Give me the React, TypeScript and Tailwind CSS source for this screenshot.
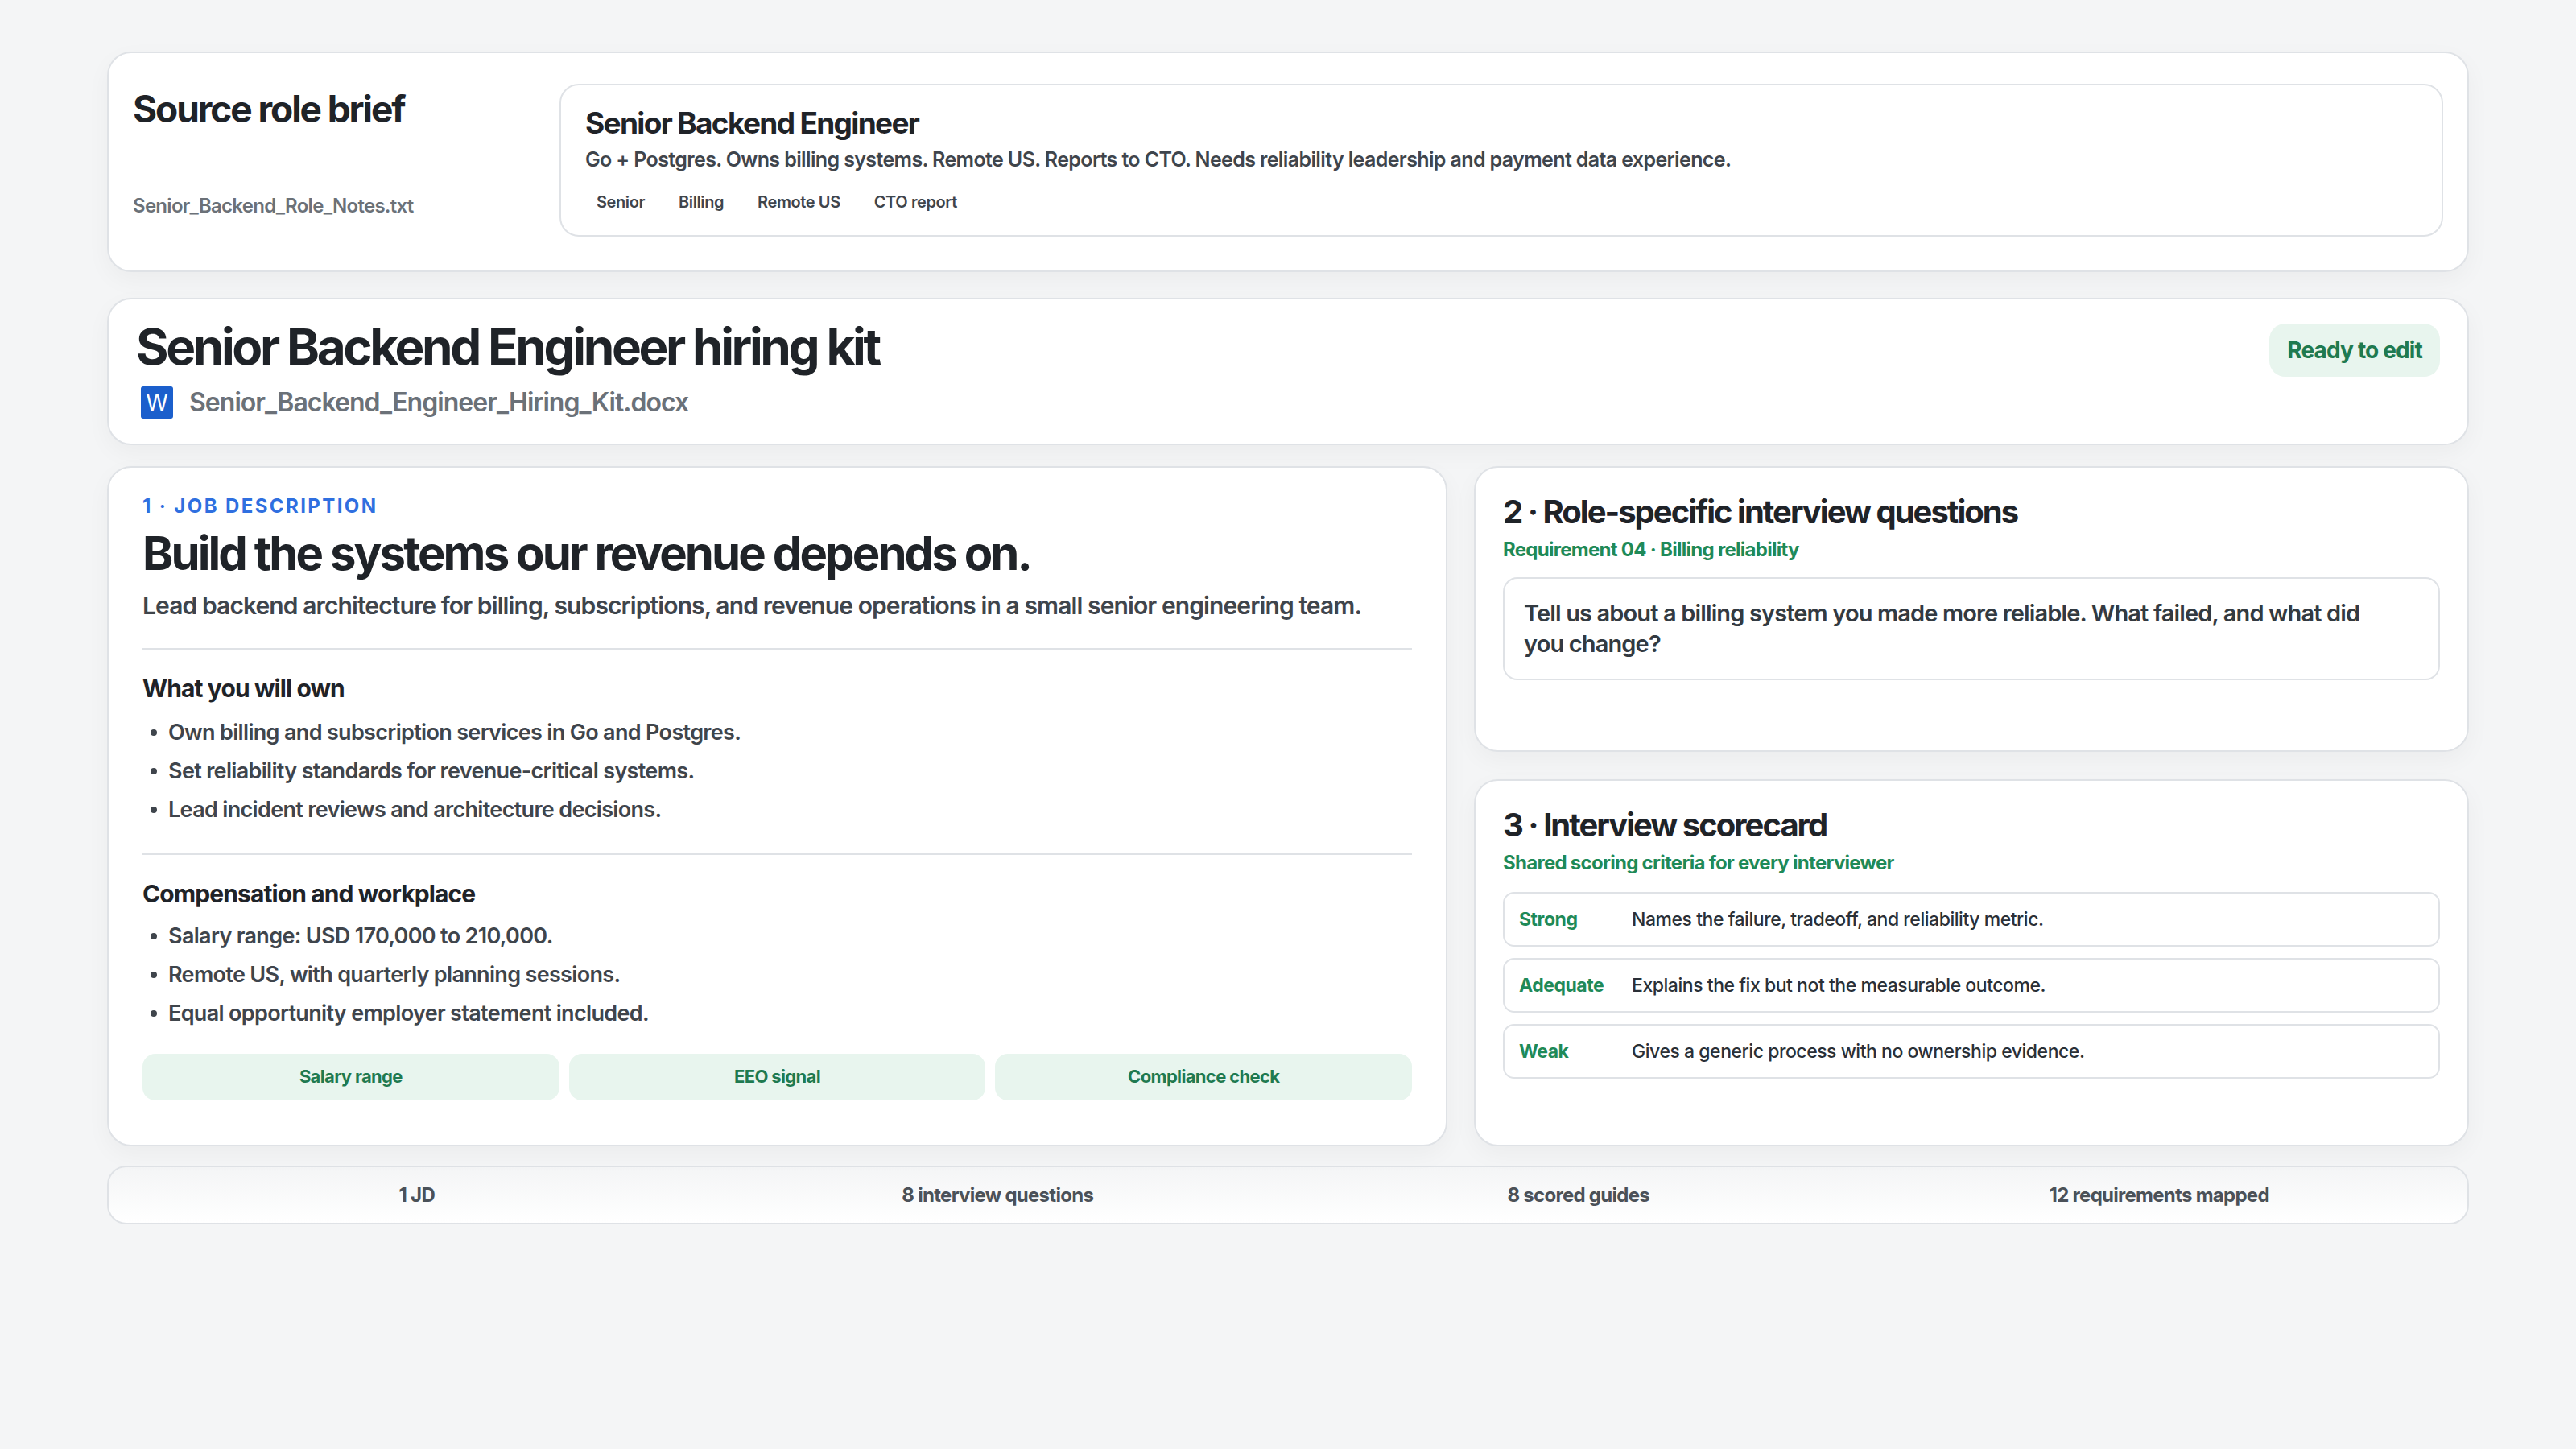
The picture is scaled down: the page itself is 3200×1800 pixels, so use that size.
export default function App() {
  const font = { fontFamily: "Inter, 'Noto Sans', sans-serif" };
  const card = "bg-white border-2 border-[#dfe2e6] rounded-[30px] shadow-[0_10px_30px_rgba(0,0,0,0.04)]";
  return (
    <div style={font} className="w-[3200px] h-[1800px] bg-[#f4f5f6] px-[133px] pt-[64px] text-[#1f2328]">
      <div className={`${card} h-[274px] flex px-[30px] py-[40px] pr-[30px] items-stretch`}>
        <div className="w-[530px] flex flex-col justify-between pt-[6px] pb-[22px]">
          <div className="text-[46px] font-bold tracking-[-0.045em] leading-none">Source role brief</div>
          <div className="text-[24px] font-semibold text-[#6b7178] tracking-[-0.03em]">Senior_Backend_Role_Notes.txt</div>
        </div>
        <div className="flex-1 -mt-[2px] h-[190px] border-2 border-[#dfe2e6] rounded-[24px] px-[30px] pt-[24px]">
          <div className="text-[37px] font-bold tracking-[-0.045em] leading-tight">Senior Backend Engineer</div>
          <div className="text-[25px] font-semibold text-[#3f454c] mt-[4px] tracking-[-0.025em]">Go + Postgres. Owns billing systems. Remote US. Reports to CTO. Needs reliability leadership and payment data experience.</div>
          <div className="flex gap-[42px] mt-[18px] pl-[14px] text-[20px] font-semibold text-[#3f454c] tracking-[-0.02em]">
            <span>Senior</span><span>Billing</span><span>Remote US</span><span>CTO report</span>
          </div>
        </div>
      </div>

      <div className={`${card} h-[183px] mt-[32px] flex justify-between px-[34px] pt-[20px]`}>
        <div>
          <div className="text-[62px] font-bold tracking-[-0.055em] leading-tight">Senior Backend Engineer hiring kit</div>
          <div className="flex items-center gap-[20px] mt-[6px] pl-[6px]">
            <div className="w-[40px] h-[40px] bg-[#1b5fcc] rounded-[3px] text-white text-[28px] flex items-center justify-center font-normal">W</div>
            <span className="text-[32px] font-semibold text-[#6b7178] tracking-[-0.03em]">Senior_Backend_Engineer_Hiring_Kit.docx</span>
          </div>
        </div>
        <div className="mt-[10px] h-[66px] px-[22px] rounded-[20px] bg-[#e8f5ee] text-[#1f7a50] text-[28px] font-bold flex items-center tracking-[-0.03em]">Ready to edit</div>
      </div>

      <div className="flex gap-[33px] mt-[26px] h-[845px]">
        <div className={`${card} flex-1 px-[42px] pt-[30px]`}>
          <div className="text-[24px] font-bold text-[#2f6fe0] tracking-[0.1em]">1 · JOB DESCRIPTION</div>
          <div className="text-[58px] font-bold tracking-[-0.05em] leading-tight mt-[4px]">Build the systems our revenue depends on.</div>
          <div className="text-[30px] font-semibold text-[#3f454c] mt-[6px] tracking-[-0.03em] whitespace-nowrap">Lead backend architecture for billing, subscriptions, and revenue operations in a small senior engineering team.</div>
          <div className="h-[2px] bg-[#dfe2e6] mt-[30px]"></div>
          <div className="text-[30px] font-bold mt-[26px] tracking-[-0.03em]">What you will own</div>
          <ul className="mt-[8px] text-[27px] font-semibold text-[#3f454c] leading-[48px] tracking-[-0.025em]">
            {["Own billing and subscription services in Go and Postgres.", "Set reliability standards for revenue-critical systems.", "Lead incident reviews and architecture decisions."].map(t => (
              <li key={t} className="flex items-center gap-[14px] pl-[10px]"><span className="w-[8px] h-[8px] rounded-full bg-[#3f454c]"></span>{t}</li>
            ))}
          </ul>
          <div className="h-[2px] bg-[#dfe2e6] mt-[30px]"></div>
          <div className="text-[30px] font-bold mt-[26px] tracking-[-0.03em]">Compensation and workplace</div>
          <ul className="mt-[6px] text-[27px] font-semibold text-[#3f454c] leading-[48px] tracking-[-0.025em]">
            {["Salary range: USD 170,000 to 210,000.", "Remote US, with quarterly planning sessions.", "Equal opportunity employer statement included."].map(t => (
              <li key={t} className="flex items-center gap-[14px] pl-[10px]"><span className="w-[8px] h-[8px] rounded-full bg-[#3f454c]"></span>{t}</li>
            ))}
          </ul>
          <div className="grid grid-cols-3 gap-[12px] mt-[26px]">
            {["Salary range", "EEO signal", "Compliance check"].map(t => (
              <div key={t} className="h-[58px] rounded-[16px] bg-[#e8f5ee] text-[#1f7a50] text-[22px] font-bold flex items-center justify-center tracking-[-0.03em]">{t}</div>
            ))}
          </div>
        </div>

        <div className="w-[1236px] flex flex-col gap-[34px]">
          <div className={`${card} h-[355px] px-[34px] pt-[30px]`}>
            <div className="text-[40px] font-bold tracking-[-0.05em] leading-tight">2 · Role-specific interview questions</div>
            <div className="text-[24px] font-bold text-[#1f8a58] mt-[4px] tracking-[-0.03em]">Requirement 04 · Billing reliability</div>
            <div className="mt-[16px] border-2 border-[#dfe2e6] rounded-[18px] pl-[24px] pr-[60px] py-[24px] text-[29px] font-semibold text-[#333a41] leading-[38px] tracking-[-0.03em]">
              Tell us about a billing system you made more reliable. What failed, and what did you change?
            </div>
          </div>
          <div className={`${card} flex-1 px-[34px] pt-[30px]`}>
            <div className="text-[40px] font-bold tracking-[-0.05em] leading-tight">3 · Interview scorecard</div>
            <div className="text-[24px] font-bold text-[#1f8a58] mt-[4px] tracking-[-0.03em]">Shared scoring criteria for every interviewer</div>
            <div className="flex flex-col gap-[14px] mt-[18px]">
              {[["Strong", "Names the failure, tradeoff, and reliability metric."], ["Adequate", "Explains the fix but not the measurable outcome."], ["Weak", "Gives a generic process with no ownership evidence."]].map(([a, b]) => (
                <div key={a} className="h-[68px] border-2 border-[#dfe2e6] rounded-[14px] flex items-center px-[18px] text-[23px] tracking-[-0.02em]">
                  <span className="w-[140px] font-bold text-[#1f8a58]">{a}</span>
                  <span className="text-[#2a3037] font-medium">{b}</span>
                </div>
              ))}
            </div>
          </div>
        </div>
      </div>

      <div className="mt-[24px] h-[73px] rounded-[24px] border-2 border-[#dfe2e6] bg-gradient-to-b from-[#f4f5f6] to-white grid grid-cols-4 px-[22px] items-center text-[24px] font-bold text-[#4b5158] tracking-[-0.03em]">
        <div className="text-center">1 JD</div>
        <div className="text-center">8 interview questions</div>
        <div className="text-center">8 scored guides</div>
        <div className="text-center">12 requirements mapped</div>
      </div>
    </div>
  );
}
